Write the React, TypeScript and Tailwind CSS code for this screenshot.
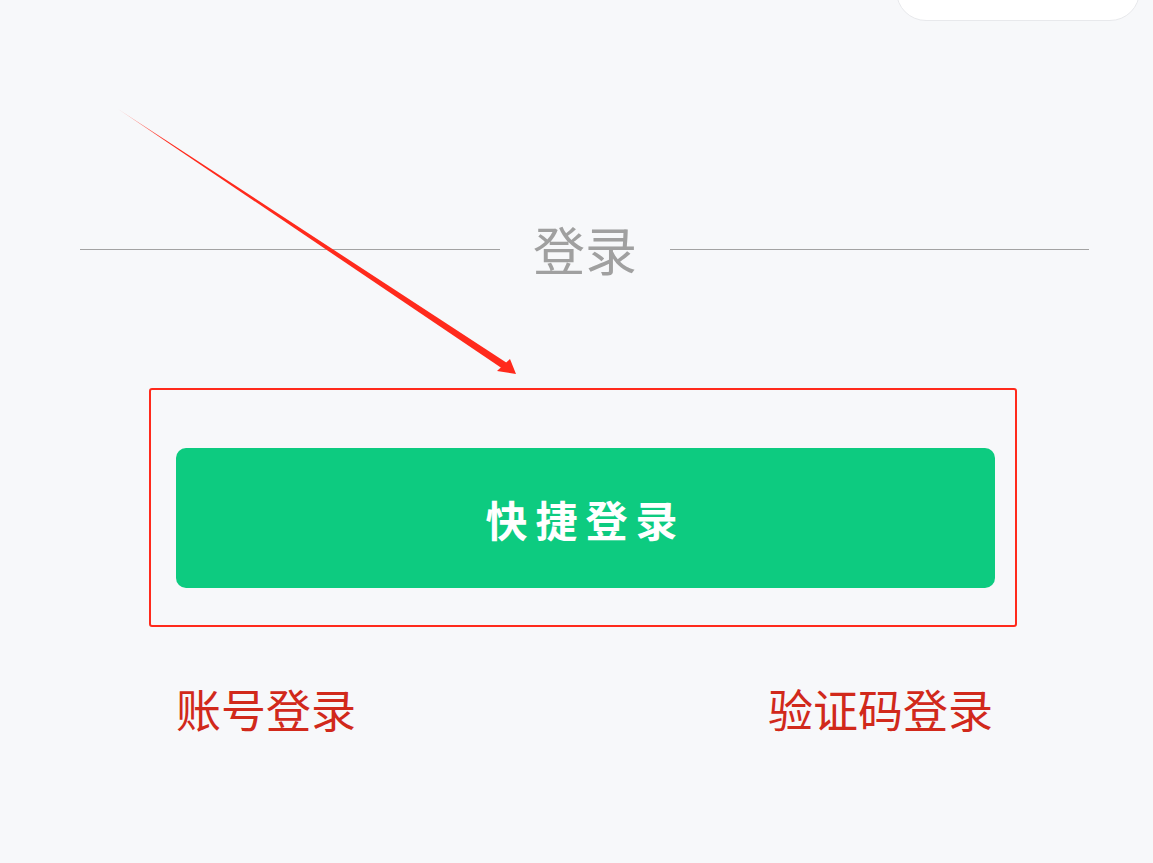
export default function App() {
  return (
    <div
      className="relative min-h-[863px] w-full overflow-hidden bg-[#f7f8fa]"
      style={{ fontFamily: '"Noto Sans CJK SC", "Noto Sans", sans-serif' }}
    >
      {/* top bar remnant */}
      <div className="flex h-[20px] justify-end pr-[13px]">
        <div className="-mt-[40px] h-[61px] w-[244px] rounded-b-[30px] border border-[#e8e9ec] bg-white" />
      </div>

      {/* divider title */}
      <div className="mt-[203px] flex items-center pl-[80px] pr-[64px]">
        <div className="h-px w-[420px] bg-[#a3a3a3]" />
        <span className="px-[33px] text-[52px] leading-[52px] text-[#a0a0a0]">登录</span>
        <div className="h-px flex-1 bg-[#a3a3a3]" />
      </div>

      {/* highlighted quick login */}
      <div className="ml-[149px] mt-[113px] w-[868px] rounded-[3px] border-2 border-[#ff2a1c] pb-[37px] pl-[25px] pr-[20px] pt-[58px]">
        <button className="flex h-[140px] w-full items-center justify-center rounded-[10px] bg-[#0dcb80] text-[42px] font-bold tracking-[8px] text-white">
          快捷登录
        </button>
      </div>

      {/* alternatives */}
      <div className="mt-[59px] flex items-center justify-between pl-[176px] pr-[160px] text-[45px] leading-[45px] text-[#d1291b]">
        <span>账号登录</span>
        <span>验证码登录</span>
      </div>

      {/* annotation arrow */}
      <svg className="pointer-events-none absolute left-0 top-0" width="1153" height="863">
        <defs>
          <linearGradient id="fade" x1="120" y1="110" x2="515" y2="372" gradientUnits="userSpaceOnUse">
            <stop offset="0" stopColor="#ff2a1c" stopOpacity="0.4" />
            <stop offset="0.12" stopColor="#ff2a1c" />
            <stop offset="1" stopColor="#ff2a1c" />
          </linearGradient>
        </defs>
        <polygon points="118,109 507,363 503,369" fill="url(#fade)" />
        <polygon points="516,374 497,371 510,359" fill="#ff2a1c" />
      </svg>
    </div>
  );
}
